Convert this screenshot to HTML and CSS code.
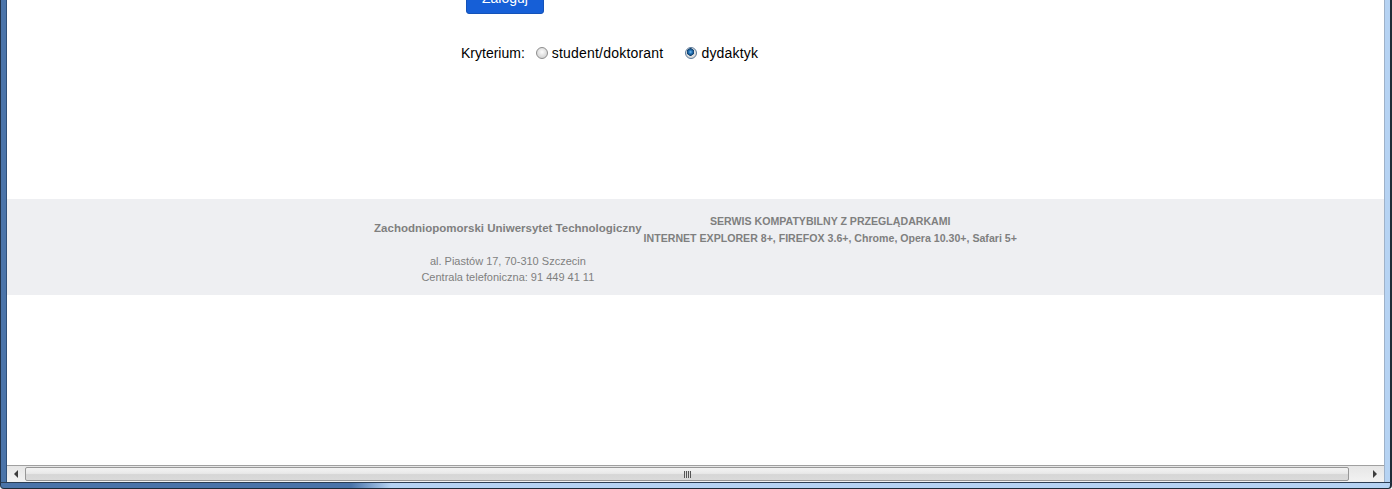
FILE: index.html
```html
<!DOCTYPE html>
<html>

  <head>
    <title>Logowanie</title>
    <link rel="stylesheet" href="styles.css">
  </head>

  <body>
    <div class="window">
      <div class="window-main">
        <div class="edge-left"></div>

        <div class="viewport">
          <div class="page">
            <div class="login">
              <button class="login-button">Zaloguj</button>

              <div class="criteria">
                <span class="criteria-label">Kryterium:</span>
                <label class="criteria-option">
                  <input type="radio" name="kryterium" value="student"> student/doktorant
                </label>
                <label class="criteria-option">
                  <input type="radio" name="kryterium" value="dydaktyk" checked> dydaktyk
                </label>
              </div>
            </div>

            <div class="footer">
              <div class="footer-col footer-address">
                <p class="footer-title">Zachodniopomorski Uniwersytet Technologiczny</p>
                <p class="footer-line">al. Piastów 17, 70-310 Szczecin</p>
                <p class="footer-line">Centrala telefoniczna: 91 449 41 11</p>
              </div>
              <div class="footer-col footer-browsers">
                <p class="footer-title">SERWIS KOMPATYBILNY Z PRZEGLĄDARKAMI</p>
                <p class="footer-title">INTERNET EXPLORER 8+, FIREFOX 3.6+, Chrome, Opera 10.30+, Safari 5+</p>
              </div>
            </div>
          </div>

          <!-- poziomy pasek przewijania (styl Windows 7) -->
          <div class="hscroll">
            <div class="hscroll-arrow"><span class="arrow-left"></span></div>
            <div class="hscroll-thumb">
              <span class="grip"></span>
            </div>
            <div class="hscroll-arrow"><span class="arrow-right"></span></div>
          </div>
        </div>

        <div class="edge-right"></div>
      </div>
      <div class="edge-bottom"></div>
    </div>
  </body>

</html>
```

FILE: styles.css
```css
body{
  margin: 0;
  overflow: hidden;
  font-family: "Liberation Sans", Arial, sans-serif;
  background-color: white;
}

.window{
  display: flex;
  flex-direction: column;
  height: 489px;
}

.window-main{
  display: flex;
  flex: 1;
  min-height: 0;
}

/* ramka okna */
.edge-left{
  width: 5px;
  background-color: #4b74a9;
  border-left: 1px solid #22344c;
  border-right: 1px solid #30507a;
}

.edge-right{
  width: 5px;
  background-color: #b6d3f3;
  border-left: 1px solid #9fb2c9;
  border-right: 2px solid #1f2b38;
}

.edge-bottom{
  height: 5px;
  border-top: 1px solid #2c3e54;
  border-bottom: 1px solid #1f2b38;
  border-left: 1px solid #22344c;
  border-right: 2px solid #1f2b38;
  border-radius: 0 0 4px 4px;
  background: linear-gradient(to right, #4b74a9 0, #4b74a9 350px, #b6d3f3 390px, #b6d3f3 100%);
}

.viewport{
  flex: 1;
  display: flex;
  flex-direction: column;
  min-width: 0;
  background-color: white;
}

.page{
  flex: 1;
  overflow: hidden;
}

/* formularz */
.login{
  margin-top: -20px;
  margin-left: 454px;
  height: 219px;
}

.login-button{
  margin-left: 5px;
  background-color: #165fd7;
  border: 1px solid #1452b8;
  border-radius: 3px;
  color: white;
  font-family: "Liberation Sans", Arial, sans-serif;
  font-size: 14px;
  line-height: 16px;
  padding: 9px 15px 7px;
  cursor: pointer;
}

.criteria{
  margin-top: 31px;
  font-size: 14px;
  line-height: 16px;
  display: flex;
  align-items: center;
}

.criteria-label{
  margin-right: 11px;
}

.criteria-option{
  display: flex;
  align-items: center;
  margin-right: 22px;
  letter-spacing: 0.2px;
}

.criteria-option input{
  appearance: none;
  width: 12px;
  height: 12px;
  margin: 0 4px 0 0;
  border: 1px solid #8d8d8d;
  border-radius: 50%;
  background: radial-gradient(circle at 50% 40%, #fdfdfd 0, #e4e4e4 45%, #c9c9c9 100%);
}

.criteria-option input:checked{
  border-color: #5d7a98;
  background:
    radial-gradient(circle at 45% 40%, #7fc3f0 0, #2a7bc0 1.5px, #0d3e6c 3.5px, transparent 4px),
    radial-gradient(circle at 50% 40%, #fdfdfd 0, #e4e4e4 45%, #c9c9c9 100%);
}

/* stopka */
.footer{
  display: flex;
  justify-content: center;
  align-items: flex-start;
  height: 96px;
  box-sizing: border-box;
  padding-top: 14px;
  background-color: #eeeff2;
  color: #7f7f7f;
  font-size: 11px;
}

.footer p{
  margin: 0;
}

.footer-col{
  text-align: center;
}

.footer-address{
  padding-top: 7px;
  margin-right: 2px;
}

.footer-title{
  font-weight: bold;
  line-height: 17px;
}

.footer-address .footer-title{
  font-size: 11.5px;
  margin-bottom: 16px;
}

.footer-browsers .footer-title{
  font-size: 10.6px;
}

.footer-line{
  line-height: 16px;
}

/* pasek przewijania */
.hscroll{
  display: flex;
  height: 16px;
  border-top: 1px solid #a0a0a0;
  background: linear-gradient(#e6e6e6, #f2f2f2);
}

.hscroll-arrow{
  width: 18px;
  display: flex;
  align-items: center;
  justify-content: center;
}

.arrow-left{
  width: 0;
  height: 0;
  border-top: 4px solid transparent;
  border-bottom: 4px solid transparent;
  border-right: 4px solid #3c3c3c;
}

.arrow-right{
  width: 0;
  height: 0;
  border-top: 4px solid transparent;
  border-bottom: 4px solid transparent;
  border-left: 4px solid #3c3c3c;
}

.hscroll-thumb{
  flex: 1;
  margin: 1px 17px 1px 0;
  border: 1px solid #979797;
  border-radius: 2px;
  background: linear-gradient(#f3f3f3, #e9e9e9 45%, #d6d6d6 55%, #dadada);
  display: flex;
  align-items: center;
  justify-content: center;
}

.grip{
  width: 7px;
  height: 7px;
  background: repeating-linear-gradient(to right, #555 0, #555 1px, #dcdcdc 1px, #dcdcdc 2px);
}
```
